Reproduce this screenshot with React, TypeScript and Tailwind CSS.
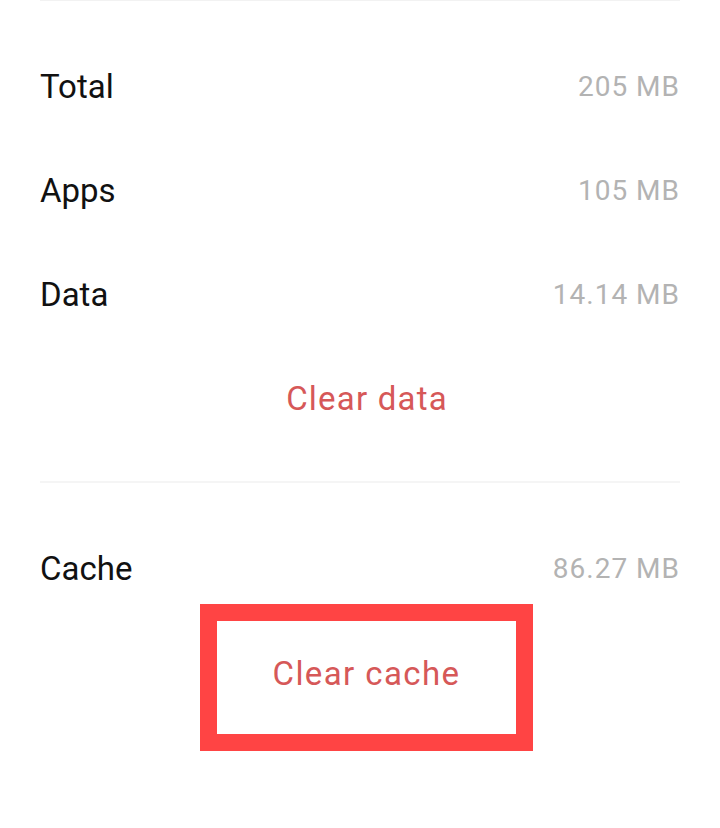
export default function App() {
  const rows = [
    { label: "Total", value: "205 MB" },
    { label: "Apps", value: "105 MB" },
    { label: "Data", value: "14.14 MB" },
  ];

  return (
    <div className="min-h-[828px] w-[720px] bg-white font-['Roboto',sans-serif]">
      <div className="mx-10 h-px bg-[#f2f2f2]" />

      <div className="pt-[34px]">
        {rows.map((r) => (
          <div key={r.label} className="mx-10 flex h-[104px] items-center justify-between">
            <span className="text-[33px] text-[#111]">{r.label}</span>
            <span className="text-[28px] tracking-[1px] text-[#b3b3b3]">{r.value}</span>
          </div>
        ))}
        <div className="flex h-[104px] items-center justify-center pl-[14px]">
          <span className="text-[33px] tracking-[1.2px] text-[#d65858]">Clear data</span>
        </div>
      </div>

      <div className="mx-10 mt-[30px] h-[2px] bg-[#f5f5f5]" />

      <div className="mx-10 mt-[51px] flex h-[70px] items-center justify-between">
        <span className="text-[33px] text-[#111]">Cache</span>
        <span className="text-[28px] tracking-[1px] text-[#b3b3b3]">86.27 MB</span>
      </div>

      <div className="ml-[200px] flex h-[147px] w-[333px] items-center justify-center border-[17px] border-[#ff4444] pb-[8px]">
        <span className="text-[33px] tracking-[1.4px] text-[#d65858]">Clear cache</span>
      </div>
    </div>
  );
}
